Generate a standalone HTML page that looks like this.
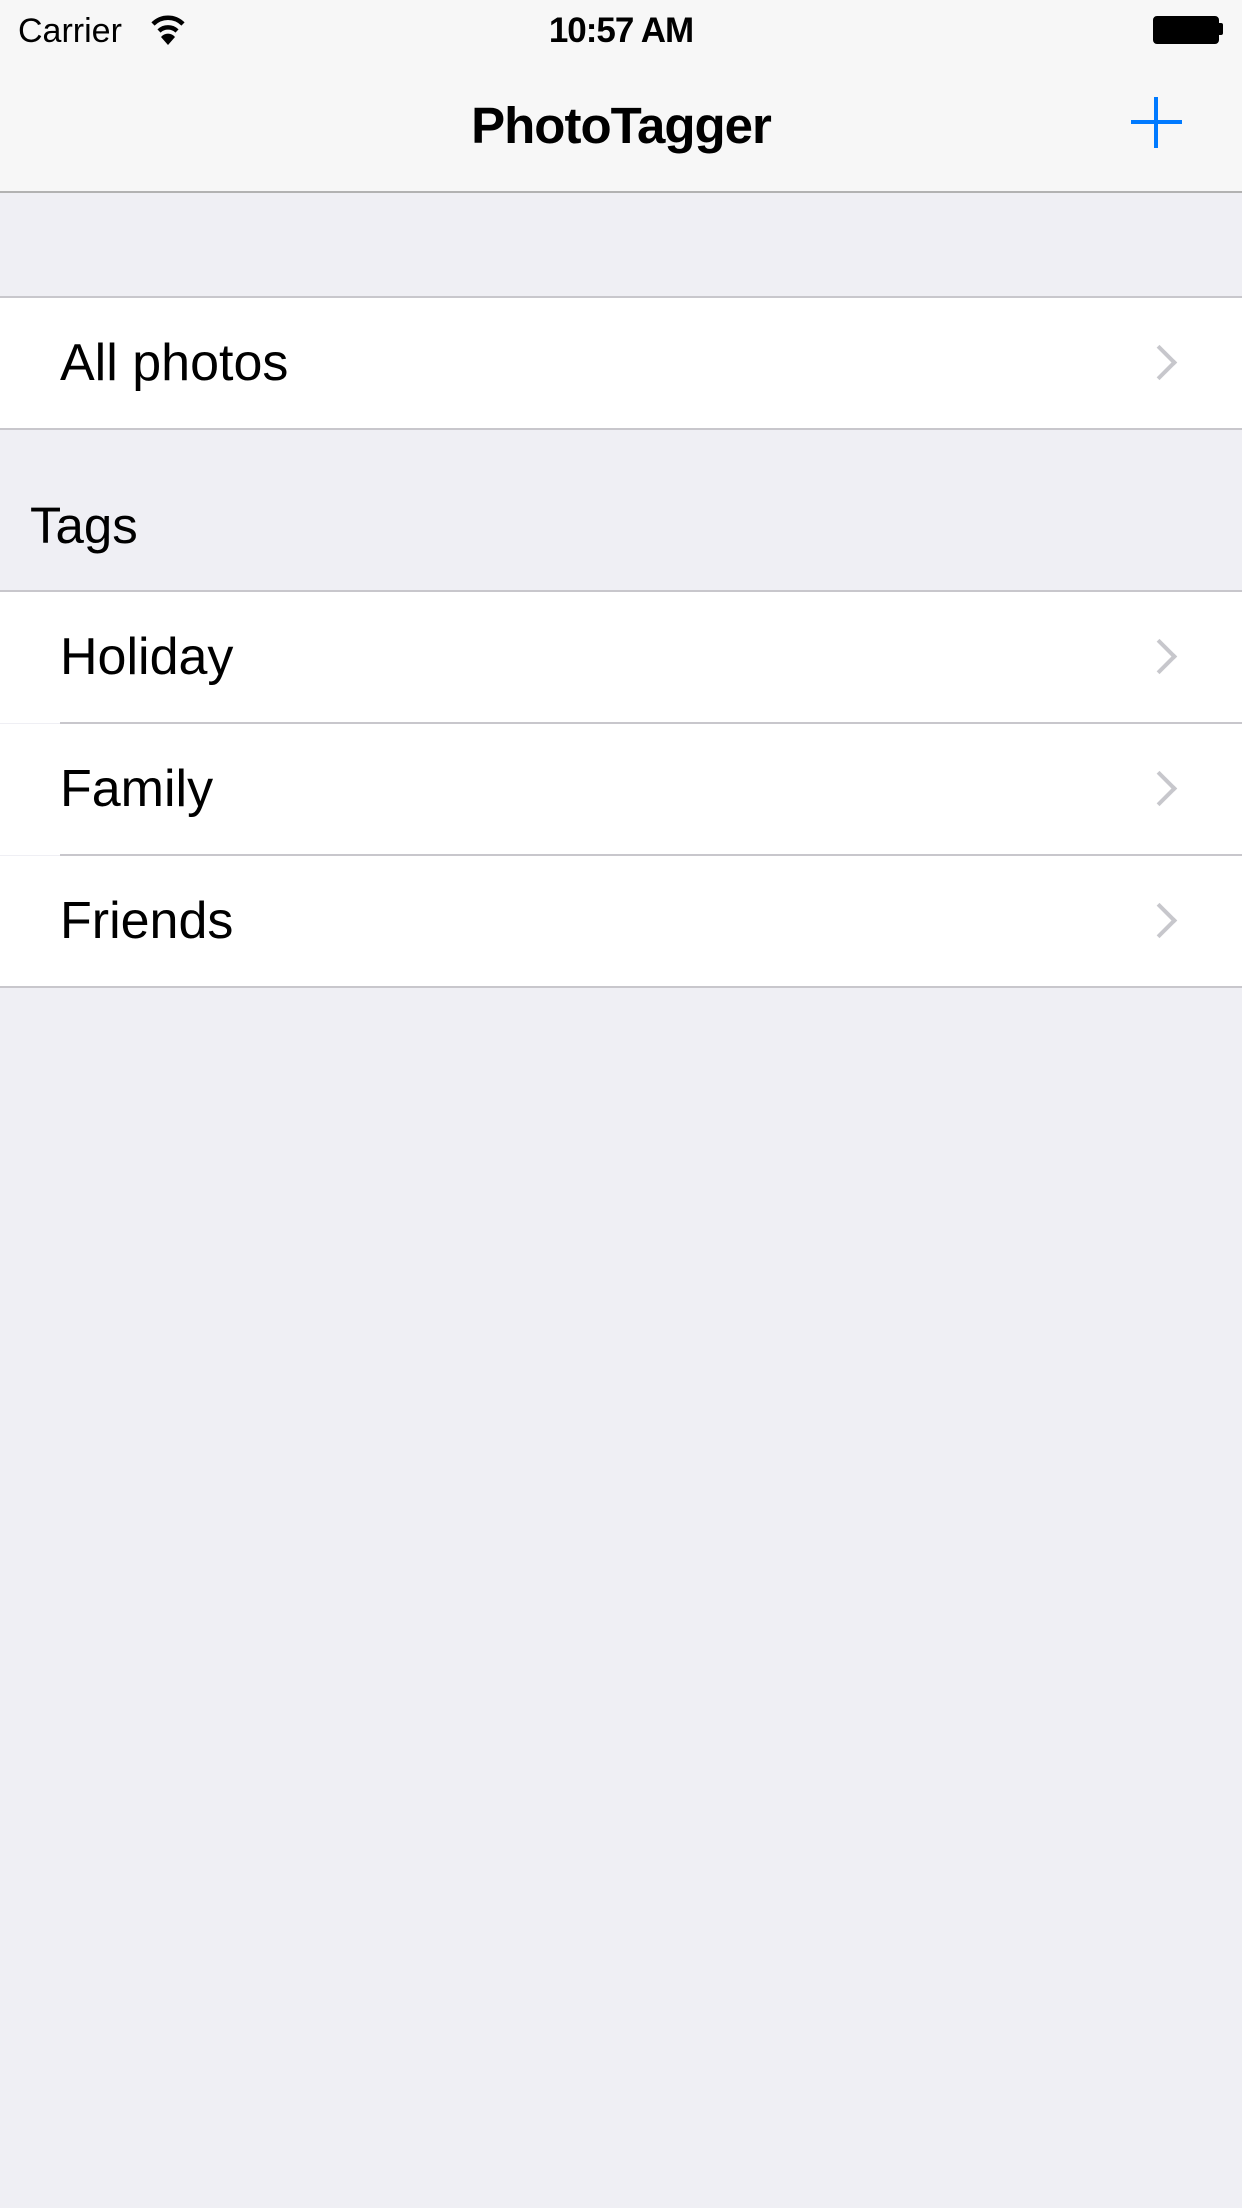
<!DOCTYPE html>
<html><head><meta charset="utf-8"><style>
body{margin:0;width:1242px;height:2208px;background:#efeff4;font-family:"Liberation Sans",sans-serif;position:relative;overflow:hidden}
.a{position:absolute}
.nav{left:0;top:0;width:1242px;height:191px;background:#f7f7f7;border-bottom:2px solid #b2b2b2}
.row{left:0;width:1242px;height:131px;background:#fff}
.t{font-size:52px;color:#000;left:60px;line-height:131px}
.sep{height:2px;background:#c8c7cc}
.chev{right:70px;width:21px;height:21px;border-right:4px solid #c7c7cc;border-top:4px solid #c7c7cc;transform:rotate(45deg)}
</style></head><body>
<div class="a nav"></div>
<div class="a" style="left:18px;top:8px;font-size:34px;line-height:46px">Carrier</div>
<svg class="a" style="left:150px;top:14px" width="36" height="32" viewBox="0 0 36 32"><path d="M3 10 A21 21 0 0 1 33 10" stroke="#000" stroke-width="4.5" fill="none"/><path d="M9 17 A13 13 0 0 1 27 17" stroke="#000" stroke-width="4.5" fill="none"/><path d="M18 31 L11 23 A9 9 0 0 1 25 23 Z" fill="#000"/></svg>
<div class="a" style="left:0;width:1242px;text-align:center;top:8px;font-size:35px;line-height:46px;font-weight:bold;letter-spacing:-1px">10:57 AM</div>
<div class="a" style="left:1153px;top:16px;width:62px;height:24px;border:2px solid #000;border-radius:4px;background:#000"></div>
<div class="a" style="left:1219px;top:23px;width:4px;height:12px;background:#000;border-radius:0 2px 2px 0"></div>
<div class="a" style="left:0;width:1242px;text-align:center;top:96px;font-size:51px;font-weight:bold;line-height:60px;letter-spacing:-1px">PhotoTagger</div>
<div class="a" style="left:1131px;top:120px;width:51px;height:4px;background:#007aff"></div>
<div class="a" style="left:1154px;top:97px;width:4px;height:51px;background:#007aff"></div>

<div class="a sep" style="left:0;width:1242px;top:296px"></div>
<div class="a row" style="top:298px"><div class="a t">All photos</div><div class="a chev" style="top:52px"></div></div>
<div class="a sep" style="left:0;width:1242px;top:428px"></div>
<div class="a" style="left:30px;top:496px;font-size:51px;line-height:60px">Tags</div>
<div class="a sep" style="left:0;width:1242px;top:590px"></div>
<div class="a row" style="top:592px"><div class="a t">Holiday</div><div class="a chev" style="top:52px"></div></div>
<div class="a sep" style="left:60px;width:1182px;top:722px"></div>
<div class="a row" style="top:724px"><div class="a t">Family</div><div class="a chev" style="top:52px"></div></div>
<div class="a sep" style="left:60px;width:1182px;top:854px"></div>
<div class="a row" style="top:856px"><div class="a t">Friends</div><div class="a chev" style="top:52px"></div></div>
<div class="a sep" style="left:0;width:1242px;top:986px"></div>
</body></html>
